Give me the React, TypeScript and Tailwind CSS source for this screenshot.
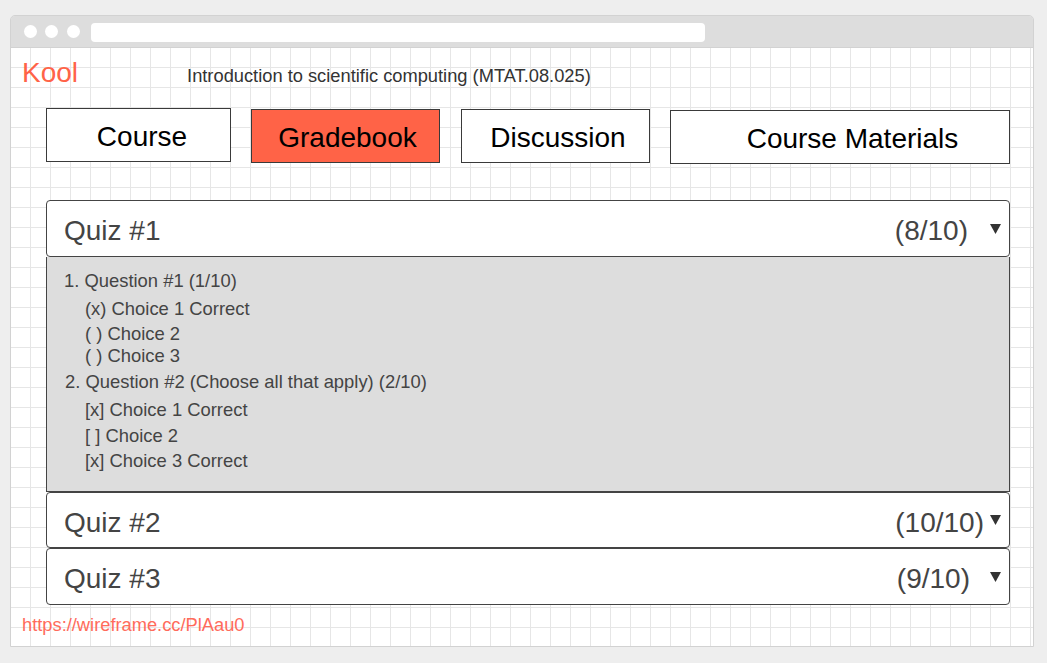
const tabs = [
  { label: 'Course', cls: 'w-[185px] mt-0 pl-[7px] bg-white' },
  { label: 'Gradebook', cls: 'w-[189px] ml-[20px] mt-[1px] pl-[4px] bg-[#ff6347]' },
  { label: 'Discussion', cls: 'w-[189px] ml-[21px] mt-[1px] pl-[5px] bg-white' },
  { label: 'Course Materials', cls: 'w-[340px] ml-[20px] mt-[2px] pl-[25px] bg-white' },
];

function Arrow() {
  return (
    <svg width="11" height="10" viewBox="0 0 11 10" className="shrink-0">
      <polygon points="0,0 11,0 5.5,10" fill="#333333" />
    </svg>
  );
}

function QuizHeader({ title, score, gap, h }: { title: string; score: string; gap: string; h: string }) {
  return (
    <div className={`flex items-center bg-white border border-[#444444] rounded-[4px] pl-[17px] pr-[8px] ${h}`}>
      <span className="mt-[5px] text-[28px] leading-[32px] text-[#444444]">{title}</span>
      <span className={`ml-auto mt-[5px] text-[28px] leading-[32px] text-[#444444] ${gap}`}>{score}</span>
      <Arrow />
    </div>
  );
}

export default function App() {
  return (
    <div className="w-full h-[663px] bg-[#eeeeee] pt-[15px] pl-[10px] font-['Liberation_Sans',Arial,sans-serif]">
      <div className="w-[1024px] h-[632px] flex flex-col border border-[#d2d2d2] rounded-t-[5px] overflow-hidden">
        {/* browser chrome */}
        <div className="h-[32px] shrink-0 bg-[#dddddd] border-b border-[#d2d2d2] flex items-center pl-[13px]">
          <div className="w-[13px] h-[13px] rounded-full bg-white" />
          <div className="w-[13px] h-[13px] rounded-full bg-white ml-[8px]" />
          <div className="w-[13px] h-[13px] rounded-full bg-white ml-[9px]" />
          <div className="w-[614px] h-[19px] rounded-[4px] bg-white ml-[11px] mt-[1px]" />
        </div>

        {/* page */}
        <div className="flex-1 pl-[11px] bg-white bg-[linear-gradient(to_right,#e6e6e6_1px,transparent_1px),linear-gradient(to_bottom,#e6e6e6_1px,transparent_1px)] bg-[size:20px_20px] bg-[position:19px_19px]">
          <div className="h-[60px] pt-[9px] flex items-baseline">
            <span className="text-[28px] leading-[32px] text-[#ff6347]">Kool</span>
            <span className="ml-[109px] text-[18.3px] leading-[22px] text-[#333333]">
              Introduction to scientific computing (MTAT.08.025)
            </span>
          </div>

          <div className="flex items-start pl-[24px] h-[56px]">
            {tabs.map((t) => (
              <div
                key={t.label}
                className={`h-[54px] pt-[3px] border border-[#3a3a3a] flex items-center justify-center text-[28px] leading-[32px] text-black ${t.cls}`}
              >
                {t.label}
              </div>
            ))}
          </div>

          <div className="mt-[36px] ml-[24px] w-[964px]">
            <QuizHeader title="Quiz #1" score="(8/10)" gap="mr-[22px]" h="h-[57px]" />
            <div className="h-[235px] bg-[#dddddd] border-x border-b border-[#444444] pt-[13px] text-[18.4px] leading-[22px] text-[#444444]">
              <div className="pl-[17px]">1. Question #1 (1/10)</div>
              <div className="pl-[38px] mt-[6px]">(x) Choice 1 Correct</div>
              <div className="pl-[38px] mt-[3px]">( ) Choice 2</div>
              <div className="pl-[38px]">( ) Choice 3</div>
              <div className="pl-[18px] mt-[4px]">2. Question #2 (Choose all that apply) (2/10)</div>
              <div className="pl-[38px] mt-[6px]">[x] Choice 1 Correct</div>
              <div className="pl-[38px] mt-[4px]">[ ] Choice 2</div>
              <div className="pl-[38px] mt-[3px]">[x] Choice 3 Correct</div>
            </div>
            <QuizHeader title="Quiz #2" score="(10/10)" gap="mr-[6px]" h="h-[56px]" />
            <QuizHeader title="Quiz #3" score="(9/10)" gap="mr-[20px]" h="h-[57px]" />
          </div>

          <div className="mt-[9px] text-[18.3px] leading-[22px] text-[#ff6b5b]">https://wireframe.cc/PlAau0</div>
        </div>
      </div>
    </div>
  );
}
